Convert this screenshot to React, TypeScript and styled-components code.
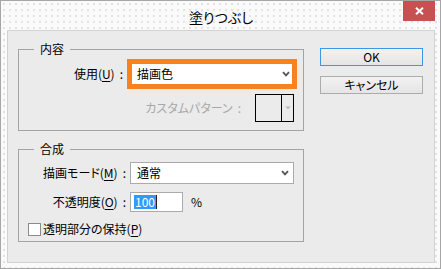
import React from 'react';
import styled, { createGlobalStyle } from 'styled-components';

const Global = createGlobalStyle`
  html, body { margin: 0; padding: 0; background: #ffffff; }
  body {
    font-family: "Noto Sans CJK JP", "Noto Sans", sans-serif;
    font-size: 12px;
    line-height: 16px;
    color: #000;
    font-feature-settings: "palt";
  }
`;

const Window = styled.div`
  width: 441px;
  height: 269px;
  box-sizing: border-box;
  border: 1px solid #a6a6a6;
  background-color: #fafafa;
  background-image: radial-gradient(circle, #e2e2e2 0.7px, transparent 1px);
  background-size: 6px 6px;
  display: flex;
  flex-direction: column;
  padding: 0 5px 5px 6px;
`;

const TitleBar = styled.div`
  height: 29px;
  flex: none;
  display: grid;
  grid-template-columns: 1fr auto 1fr;
  align-items: start;
`;

const Title = styled.div`
  grid-column: 2;
  margin-top: 8px;
  font-size: 14px;
  line-height: 16px;
  color: #000;
`;

const CloseButton = styled.div`
  grid-column: 3;
  justify-self: end;
  width: 32px;
  height: 20px;
  background: #c75050;
  display: flex;
  align-items: center;
  justify-content: center;
`;

const Client = styled.div`
  flex: 1;
  box-sizing: border-box;
  border: 1px solid #d2d2d2;
  background: #ebebeb;
  display: flex;
  align-items: flex-start;
  padding: 10px 0 0 10px;
`;

const GroupColumn = styled.div`
  width: 286px;
  display: flex;
  flex-direction: column;
  gap: 10px;
`;

const Group = styled.fieldset<{ $h: number }>`
  margin: 0;
  padding: 0;
  min-width: 0;
  box-sizing: border-box;
  height: ${(p) => p.$h}px;
  border: 1px solid #a3a3a3;
`;

const Legend = styled.legend`
  margin-left: 15px;
  padding: 0 6px;
  line-height: 16px;
  font-size: 12px;
`;

const Row = styled.div<{ $mt: number; $mr?: number; $end?: boolean }>`
  display: flex;
  align-items: center;
  margin-top: ${(p) => p.$mt}px;
  margin-right: ${(p) => p.$mr ?? 0}px;
  justify-content: ${(p) => (p.$end ? 'flex-end' : 'flex-start')};
`;

const Label = styled.div<{ $w?: number; $muted?: boolean }>`
  ${(p) => (p.$w ? `width: ${p.$w}px;` : '')}
  text-align: right;
  white-space: nowrap;
  color: ${(p) => (p.$muted ? '#a8a8a8' : '#000')};
`;

const Colon = styled.span`
  margin: 0 4px 0 5px;
`;

const Mnemonic = styled.span`
  text-decoration: underline;
  text-underline-offset: 2px;
`;

const HighlightSelect = styled.div`
  width: 170px;
  height: 30px;
  box-sizing: border-box;
  border: 5px solid #f7821f;
  background: #fff;
  display: flex;
  align-items: center;
  justify-content: space-between;
  padding: 0 2px 0 5px;
`;

const Select = styled.div<{ $w: number }>`
  width: ${(p) => p.$w}px;
  height: 22px;
  box-sizing: border-box;
  border: 1px solid #ababab;
  background: #fff;
  display: flex;
  align-items: center;
  justify-content: space-between;
  padding: 0 4px 0 6px;
`;

const PatternBox = styled.div`
  width: 39px;
  height: 28px;
  box-sizing: border-box;
  border: 1px solid #000;
  margin-left: 10px;
  display: grid;
  grid-template-columns: 26px 1fr;
`;

const PatternSwatch = styled.div`
  border-right: 1px solid #000;
`;

const PatternArrow = styled.div`
  display: flex;
  align-items: center;
  justify-content: center;
`;

const TextInput = styled.div`
  width: 53px;
  height: 20px;
  box-sizing: border-box;
  border: 1px solid #ababab;
  background: #fff;
  display: flex;
  align-items: center;
  padding-left: 3px;
`;

const Selected = styled.span`
  background: #3399ff;
  color: #fff;
  line-height: 14px;
  padding: 0 1px;
`;

const Caret = styled.span`
  width: 1px;
  height: 14px;
  background: #222;
`;

const Unit = styled.span`
  margin-left: 8px;
`;

const CheckBox = styled.div`
  width: 13px;
  height: 13px;
  box-sizing: border-box;
  border: 1px solid #8a8a8a;
  background: #fff;
  margin-left: 9px;
  margin-right: 2px;
`;

const ButtonColumn = styled.div`
  margin-left: 16px;
  margin-top: 7px;
  width: 103px;
  display: flex;
  flex-direction: column;
  gap: 10px;
`;

const Button = styled.div<{ $default?: boolean }>`
  height: 18px;
  box-sizing: border-box;
  border: 1px solid ${(p) => (p.$default ? '#3c97e8' : '#acacac')};
  background: linear-gradient(#f2f2f2, #e5e5e5);
  display: flex;
  align-items: center;
  justify-content: center;
  font-size: 12px;
`;

const Chevron = () => (
  <svg width="8" height="6" viewBox="0 0 8 6">
    <path d="M1 1.2 L4 4.4 L7 1.2" fill="none" stroke="#555" strokeWidth="1.8" />
  </svg>
);

export default function App() {
  return (
    <>
      <Global />
      <Window>
        <TitleBar>
          <Title>塗りつぶし</Title>
          <CloseButton>
            <svg width="9" height="8" viewBox="0 0 9 8">
              <path d="M1 0.8 L8 7.2 M8 0.8 L1 7.2" stroke="#fff" strokeWidth="2" />
            </svg>
          </CloseButton>
        </TitleBar>
        <Client>
          <GroupColumn>
            <Group $h={90}>
              <Legend>内容</Legend>
              <Row $mt={2}>
                <Label $w={108}>
                  使用(<Mnemonic>U</Mnemonic>)<Colon>:</Colon>
                </Label>
                <HighlightSelect>
                  <span>描画色</span>
                  <Chevron />
                </HighlightSelect>
              </Row>
              <Row $mt={5} $mr={9} $end>
                <Label $muted>
                  カスタムパターン<Colon>:</Colon>
                </Label>
                <PatternBox>
                  <PatternSwatch />
                  <PatternArrow>
                    <svg width="6" height="4" viewBox="0 0 6 4">
                      <path d="M0.5 0.5 L5.5 0.5 L3 3.5 Z" fill="#b8b8b8" />
                    </svg>
                  </PatternArrow>
                </PatternBox>
              </Row>
            </Group>
            <Group $h={101}>
              <Legend>合成</Legend>
              <Row $mt={5}>
                <Label $w={111}>
                  描画モード(<Mnemonic>M</Mnemonic>)<Colon>:</Colon>
                </Label>
                <Select $w={164}>
                  <span>通常</span>
                  <Chevron />
                </Select>
              </Row>
              <Row $mt={8}>
                <Label $w={111}>
                  不透明度(<Mnemonic>O</Mnemonic>)<Colon>:</Colon>
                </Label>
                <TextInput>
                  <Selected>100</Selected>
                  <Caret />
                </TextInput>
                <Unit>%</Unit>
              </Row>
              <Row $mt={9}>
                <CheckBox />
                <Label>
                  透明部分の保持(<Mnemonic>P</Mnemonic>)
                </Label>
              </Row>
            </Group>
          </GroupColumn>
          <ButtonColumn>
            <Button $default>OK</Button>
            <Button>キャンセル</Button>
          </ButtonColumn>
        </Client>
      </Window>
    </>
  );
}
